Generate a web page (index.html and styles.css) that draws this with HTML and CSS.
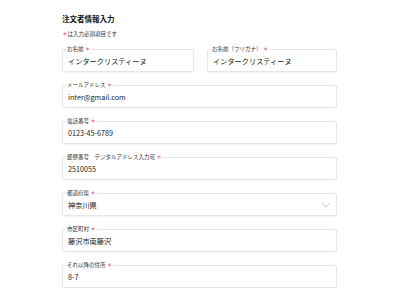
FILE: index.html
```html
<!DOCTYPE html>
<html lang="ja">
<head>
	<meta charset="UTF-8">
	<meta name="viewport" content="width=device-width, initial-scale=1.0">
	<title>注文者情報入力</title>
	<link rel="stylesheet" href="styles.css">
</head>
<body>

	<div class="wrap">
		<h1 class="form-title">注文者情報入力</h1>
		<p class="form-note"><span class="req">＊</span>は入力必須項目です</p>

		<div class="form-row form-row--half">
			<fieldset class="field">
				<legend>お名前 <span class="req">＊</span></legend>
				<div class="field__value">インタークリスティーヌ</div>
			</fieldset>
			<fieldset class="field">
				<legend>お名前（フリガナ） <span class="req">＊</span></legend>
				<div class="field__value">インタークリスティーヌ</div>
			</fieldset>
		</div>

		<div class="form-row">
			<fieldset class="field">
				<legend>メールアドレス <span class="req">＊</span></legend>
				<div class="field__value">inter@gmail.com</div>
			</fieldset>
		</div>

		<div class="form-row">
			<fieldset class="field">
				<legend>電話番号 <span class="req">＊</span></legend>
				<div class="field__value">0123-45-6789</div>
			</fieldset>
		</div>

		<div class="form-row">
			<fieldset class="field">
				<legend>郵便番号　デジタルアドレス入力可 <span class="req">＊</span></legend>
				<div class="field__value">2510055</div>
			</fieldset>
		</div>

		<div class="form-row">
			<fieldset class="field field--select">
				<legend>都道府県 <span class="req">＊</span></legend>
				<div class="field__value">
					<span>神奈川県</span>
					<svg class="chevron" width="8" height="5" viewBox="0 0 8 5">
						<path d="M0.5 0.5 L4 4 L7.5 0.5" fill="none" stroke="#b5b5b5" stroke-width="0.8"/>
					</svg>
				</div>
			</fieldset>
		</div>

		<div class="form-row">
			<fieldset class="field">
				<legend>市区町村 <span class="req">＊</span></legend>
				<div class="field__value">藤沢市南藤沢</div>
			</fieldset>
		</div>

		<div class="form-row">
			<fieldset class="field">
				<legend>それ以降の住所 <span class="req">＊</span></legend>
				<div class="field__value">8-7</div>
			</fieldset>
		</div>
	</div>

</body>
</html>
```

FILE: styles.css
```css
* {
    margin: 0;
    padding: 0;
    box-sizing: border-box;
}

body {
    background: #fff;
    color: #222;
    font-family: "Noto Sans CJK JP", "Noto Sans", sans-serif;
}

.wrap {
    width: 275px;
    margin-left: 62px;
    padding-top: 14px;
}

.form-title {
    font-size: 7.5px;
    font-weight: 700;
    line-height: 10px;
    color: #111;
}

.form-note {
    font-size: 5.5px;
    line-height: 8px;
    margin-top: 6px;
    color: #333;
}

.req {
    color: #e4437c;
}

.form-row {
    margin-top: 8px;
}

.form-row + .form-row {
    margin-top: 10px;
}

.form-row--half {
    display: grid;
    grid-template-columns: 132px 130px;
    column-gap: 13px;
}

.field {
    border: 1px solid #e6e6e6;
    border-radius: 2px;
    padding: 0 6px 1px 4px;
    box-shadow: 0 1px 1px rgba(0, 0, 0, 0.04);
}

.field legend {
    font-size: 5.5px;
    line-height: 7px;
    padding: 0 1px;
    margin-left: -1px;
    color: #333;
}

.field__value {
    font-size: 7.2px;
    line-height: 13px;
    padding: 2px 0 2px 1px;
    color: #1a1a1a;
}

.field--select .field__value {
    display: flex;
    justify-content: space-between;
    align-items: center;
}

.chevron {
    margin-right: 0;
}
```
